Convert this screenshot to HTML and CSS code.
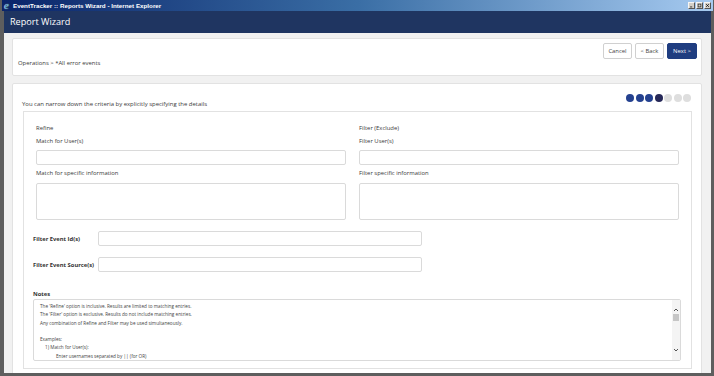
FILE: index.html
```html
<!DOCTYPE html>
<html lang="en">
<head>
    <meta charset="UTF-8">
    <meta name="viewport" content="width=device-width, initial-scale=1.0">
    <title>EventTracker :: Reports Wizard</title>
    <link rel="stylesheet" href="styles.css">
</head>
<body>
    <div class="window">
        <div class="titlebar">
            <span class="ie-icon">e</span>
            <span class="title-text">EventTracker :: Reports Wizard - Internet Explorer</span>
            <div class="win-buttons">
                <span class="win-btn"><svg viewBox="0 0 7 7" width="7" height="7"><path d="M1.5 5.5h3" stroke="#000" stroke-width="1"/></svg></span>
                <span class="win-btn"><svg viewBox="0 0 7 7" width="7" height="7"><rect x="1.5" y="1.5" width="4" height="4" fill="none" stroke="#000" stroke-width="0.8"/></svg></span>
                <span class="win-btn"><svg viewBox="0 0 7 7" width="7" height="7"><path d="M1.5 1.5l4 4M5.5 1.5l-4 4" stroke="#000" stroke-width="1"/></svg></span>
            </div>
        </div>

        <div class="app">
            <header class="app-header">Report Wizard</header>

            <main class="content">
                <section class="card card-top">
                    <div class="actions">
                        <button class="btn">Cancel</button>
                        <button class="btn">&lt; Back</button>
                        <button class="btn btn-primary">Next &gt;</button>
                    </div>
                    <div class="breadcrumb">Operations &gt; *All error events</div>
                </section>

                <section class="card card-main">
                    <div class="intro-row">
                        <p class="intro">You can narrow down the criteria by explicitly specifying the details</p>
                        <div class="steps">
                            <span class="dot done"></span>
                            <span class="dot done"></span>
                            <span class="dot done"></span>
                            <span class="dot current"></span>
                            <span class="dot"></span>
                            <span class="dot"></span>
                            <span class="dot"></span>
                        </div>
                    </div>

                    <div class="panel">
                        <div class="columns">
                            <div class="column">
                                <div class="label">Refine</div>
                                <div class="label label-gap">Match for User(s)</div>
                                <div class="input"></div>
                                <div class="label label-gap-sm">Match for specific information</div>
                                <div class="textarea"></div>
                            </div>
                            <div class="column">
                                <div class="label">Filter (Exclude)</div>
                                <div class="label label-gap">Filter User(s)</div>
                                <div class="input"></div>
                                <div class="label label-gap-sm">Filter specific information</div>
                                <div class="textarea"></div>
                            </div>
                        </div>

                        <div class="inline-field">
                            <span class="label-bold">Filter Event Id(s)</span>
                            <div class="input input-wide"></div>
                        </div>
                        <div class="inline-field">
                            <span class="label-bold">Filter Event Source(s)</span>
                            <div class="input input-wide"></div>
                        </div>

                        <div class="notes">
                            <div class="label-bold">Notes</div>
                            <div class="notes-box">
                                <div class="notes-text">
                                    <div>The 'Refine' option is inclusive. Results are limited to matching entries.</div>
                                    <div>The 'Filter' option is exclusive. Results do not include matching entries.</div>
                                    <div>Any combination of Refine and Filter may be used simultaneously.</div>
                                    <div>&nbsp;</div>
                                    <div>Examples:</div>
                                    <div class="indent-1">1) Match for User(s):</div>
                                    <div class="indent-2">Enter usernames separated by || (for OR)</div>
                                </div>
                                <div class="scrollbar">
                                    <svg viewBox="0 0 8 6" width="8" height="6"><path d="M2 4l2-2 2 2" fill="none" stroke="#555" stroke-width="1"/></svg>
                                    <span class="thumb"></span>
                                    <span class="track"></span>
                                    <svg viewBox="0 0 8 6" width="8" height="6"><path d="M2 2l2 2 2-2" fill="none" stroke="#555" stroke-width="1"/></svg>
                                </div>
                            </div>
                        </div>
                    </div>
                </section>
            </main>
        </div>
    </div>
</body>
</html>
```

FILE: styles.css
```css
:root {
    --frame: #5e5e5e;
    --navy: #1f3561;
    --primary: #1f3d80;
    --background: #f1f1f1;
    --card: #ffffff;
    --text: #3a3a3a;
    --border: #e2e2e2;
    --input-border: #dadada;
}

* {
    margin: 0;
    padding: 0;
    box-sizing: border-box;
    font-family: 'Open Sans', 'Noto Sans', sans-serif;
}

html, body {
    height: 100%;
}

body {
    background-color: var(--frame);
    color: var(--text);
    overflow: hidden;
}

.window {
    display: flex;
    flex-direction: column;
    height: 100vh;
    padding: 0 3px 3px 4px;
}

/* title bar */
.titlebar {
    display: flex;
    align-items: center;
    height: 11px;
    margin: 0 -2px 0 -2px;
    padding: 0 2px 0 2px;
    background: linear-gradient(to right, #0a246a 0%, #3a6ea5 50%, #a6caf0 100%);
}

.ie-icon {
    width: 9px;
    font-family: 'Liberation Serif', serif;
    font-style: italic;
    font-weight: bold;
    font-size: 11px;
    line-height: 9px;
    color: #4aa3e8;
    text-shadow: 0 0 1px #f0c040;
}

.title-text {
    flex: 1;
    font-family: 'Liberation Sans', sans-serif;
    font-weight: bold;
    font-size: 6.25px;
    color: #ffffff;
}

.win-buttons {
    display: flex;
    gap: 1px;
}

.win-btn {
    display: flex;
    width: 7px;
    height: 7px;
    background-color: #d4d0c8;
    border: 1px solid #f5f5f5;
    border-right-color: #555;
    border-bottom-color: #555;
    align-items: center;
    justify-content: center;
}

.win-btn svg {
    width: 5px;
    height: 5px;
}

/* app */
.app {
    flex: 1;
    display: flex;
    flex-direction: column;
    min-height: 0;
}

.app-header {
    height: 22px;
    padding-left: 6px;
    background-color: var(--navy);
    color: #ffffff;
    font-size: 9.1px;
    line-height: 22px;
}

.content {
    flex: 1;
    min-height: 0;
    overflow: hidden;
    background-color: var(--background);
    padding: 5px 9px 0 8px;
}

.card {
    background-color: var(--card);
    border: 1px solid var(--border);
    border-radius: 2px;
}

.card-top {
    padding: 4px 4px 8px 4px;
    margin-bottom: 7px;
}

.actions {
    display: flex;
    justify-content: flex-end;
    gap: 3px;
}

.btn {
    height: 16px;
    width: 29px;
    border: 1px solid #d0d0d0;
    border-radius: 2px;
    background-color: #ffffff;
    color: #444444;
    font-size: 5.9px;
}

.btn-primary {
    width: 30px;
    background-color: var(--primary);
    border-color: var(--primary);
    color: #ffffff;
}

.breadcrumb {
    font-size: 5.9px;
    line-height: 8px;
    padding-left: 1px;
}

.card-main {
    padding: 10px 9px 6px 10px;
}

.intro-row {
    display: flex;
    justify-content: space-between;
    align-items: flex-start;
    margin-bottom: 3px;
}

.intro {
    margin-top: 6px;
    margin-left: -1px;
    font-size: 5.95px;
    line-height: 8px;
}

.steps {
    display: flex;
    gap: 1.5px;
    margin-right: 1px;
}

.dot {
    width: 8px;
    height: 8px;
    border-radius: 50%;
    background-color: #dedede;
}

.dot.done {
    background-color: #24418f;
}

.dot.current {
    background-color: #262858;
}

/* inner panel */
.panel {
    border: 1px solid var(--border);
    padding: 12px 10px 7px 9px;
}

.columns {
    display: grid;
    grid-template-columns: 310px 320px;
    gap: 13px;
    margin-left: 3px;
}

.label {
    font-size: 5.9px;
    line-height: 8px;
}

.label-gap {
    margin-top: 5px;
    margin-bottom: 5px;
}

.label-gap-sm {
    margin-top: 4px;
    margin-bottom: 6px;
}

.input {
    height: 15px;
    border: 1px solid var(--input-border);
    border-radius: 2px;
    background-color: #ffffff;
}

.textarea {
    height: 37px;
    border: 1px solid var(--input-border);
    border-radius: 2px;
    background-color: #ffffff;
}

.inline-field {
    display: flex;
    align-items: center;
    margin-top: 11px;
}

.label-bold {
    width: 65px;
    font-size: 5.8px;
    font-weight: bold;
    line-height: 8px;
    color: #333333;
    white-space: nowrap;
}

.input-wide {
    width: 324px;
}

/* notes */
.notes {
    margin-top: 18px;
}

.notes .label-bold {
    margin-bottom: 1px;
}

.notes-box {
    display: flex;
    height: 62px;
    width: 648px;
    border: 1px solid var(--input-border);
    border-radius: 2px;
    overflow: hidden;
}

.notes-text {
    flex: 1;
    padding: 2px 6px;
    font-size: 4.65px;
    line-height: 8.3px;
    color: #444444;
    white-space: nowrap;
}

.indent-1 {
    padding-left: 5px;
}

.indent-2 {
    padding-left: 16px;
}

.scrollbar {
    display: flex;
    flex-direction: column;
    align-items: center;
    width: 8px;
    padding: 7px 0 7px 0;
    background-color: #f4f4f4;
}

.thumb {
    width: 6px;
    height: 7px;
    margin-top: 1px;
    background-color: #c6c6c6;
}

.track {
    flex: 1;
}
```
